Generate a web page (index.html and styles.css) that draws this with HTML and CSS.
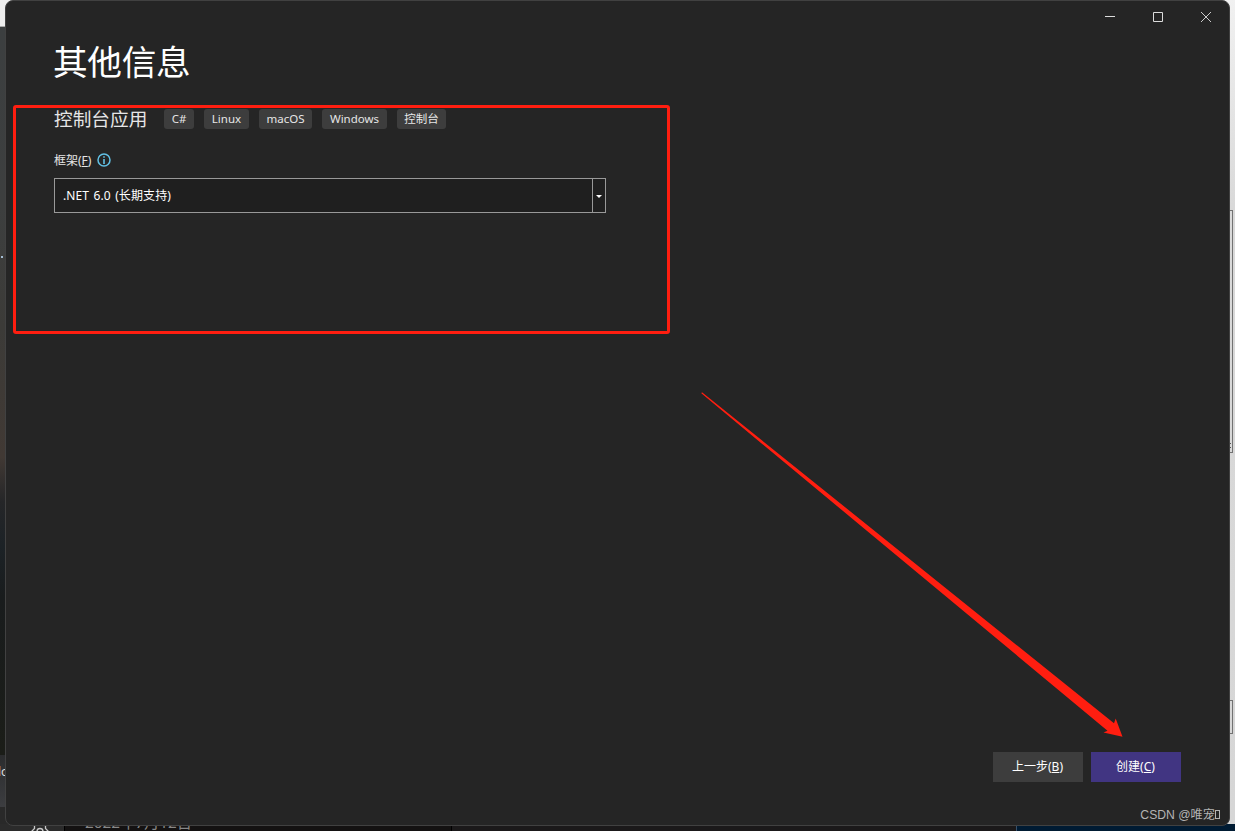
FILE: index.html
```html
<!DOCTYPE html>
<html lang="zh-CN">
<head>
    <meta charset="UTF-8">
    <meta name="viewport" content="width=device-width, initial-scale=1.0">
    <title>其他信息</title>
    <link rel="stylesheet" href="styles.css">
</head>
<body>
    <!-- what shows around the edges of the dialog -->
    <div class="desktop">
        <div class="desk-left">
            <div class="desk-light"></div>
            <div class="desk-photo"><span class="desk-dot"></span></div>
            <div class="desk-tab">lo</div>
            <div class="desk-tab-end"></div>
        </div>
        <div class="desk-right">
            <div class="desk-box tall"><i></i><i></i></div>
            <div class="desk-box short"></div>
        </div>
        <div class="desk-bottom">
            <div class="gear-cell">
                <svg width="18" height="18" viewBox="0 0 18 18" fill="none" stroke="#c8c8c8" stroke-width="1.3">
                    <path d="M3.500 1v2.500L1 6v6l2.500 2.500V17h11v-2.500L17 12V6l-2.500-2.500V1"/>
                    <circle cx="9" cy="6.500" r="3"/>
                </svg>
            </div>
            <div class="date-cell">2022年7月12日</div>
            <div class="plain-cell"></div>
            <div class="blue-cell"></div>
        </div>
    </div>

    <main class="window">
        <div class="titlebar">
            <svg class="win-btn" viewBox="0 0 10 10"><path d="M0 4.500h10"/></svg>
            <svg class="win-btn" viewBox="0 0 10 10"><path d="M.5.5h9v9h-9z"/></svg>
            <svg class="win-btn close" viewBox="0 0 10 10"><path d="M0 0l10 10M10 0L0 10"/></svg>
        </div>

        <div class="content">
            <h1>其他信息</h1>
            <div class="project">
                <h2>控制台应用</h2>
                <span class="tag tag-cs">C#</span>
                <span class="tag tag-linux">Linux</span>
                <span class="tag tag-mac">macOS</span>
                <span class="tag tag-win">Windows</span>
                <span class="tag tag-console">控制台</span>
            </div>

            <div class="label-row">
                <label>框架(<u>F</u>)</label>
                <svg class="info" width="14" height="14" viewBox="0 0 14 14">
                    <circle cx="7" cy="7" r="6" fill="none" stroke="#62c1e5" stroke-width="1.500"/>
                    <path d="M6.200 3.200h1.600v1.600H6.200zM6.200 6h1.600v5H6.200z" fill="#62c1e5"/>
                </svg>
            </div>
            <div class="select">
                <span class="select-value">.NET 6.0 (长期支持)</span>
                <span class="select-arrow">
                    <svg width="6" height="3" viewBox="0 0 6 3"><path d="M0 0h6L3 3z" fill="#fff"/></svg>
                </span>
            </div>
        </div>

        <div class="actions">
            <button class="btn">上一步(<u>B</u>)</button>
            <button class="btn primary">创建(<u>C</u>)</button>
        </div>
        <div class="watermark">CSDN @唯宠<span class="tofu"></span></div>
    </main>

    <svg class="marks" width="1235" height="831" viewBox="0 0 1235 831">
        <rect x="14.500" y="106.500" width="654" height="226" rx="1.500" fill="none" stroke="#ff1e10" stroke-width="3"/>
        <path d="M702 392.200L1114 723.300L1115.700 718.500L1122.500 736.700L1103.500 732.500L1107.500 730.700L701.300 393.300Z" fill="#ff1e10"/>
    </svg>
</body>
</html>
```

FILE: styles.css
```css
:root {
    --window-bg: #252525;
    --window-border: #414141;
    --tag-bg: #3d3d3d;
    --accent: #413582;
}

* {
    box-sizing: border-box;
}

body {
    margin: 0;
    width: 1235px;
    height: 831px;
    position: relative;
    overflow: hidden;
    font-family: "Noto Sans", "Noto Sans CJK SC", sans-serif;
    font-size: 12px;
    color: #fff;
}

h1, h2 {
    margin: 0;
    font-weight: normal;
}

u {
    text-underline-offset: 1px;
}

/* desktop behind the dialog */
.desktop {
    width: 1235px;
    height: 831px;
    display: grid;
    grid-template-columns: 617px 618px;
    grid-template-rows: 824px 7px;
    background: #1b1b1b;
}

.desk-left {
    display: flex;
    flex-direction: column;
}

.desk-light {
    height: 27px;
    width: 20px;
    background: #ededed;
    border-bottom: 1px solid #aaa;
}

.desk-photo {
    height: 728px;
    padding-top: 229px;
    background: linear-gradient(#3c3f40 0, #3d3f3f 180px, #3c3b38 300px, #413934 430px, #252628 475px, #1c2226 520px, #191c1d 570px, #1b1d18 100%);
}

.desk-dot {
    display: block;
    width: 2px;
    height: 2px;
    margin-left: 1px;
    background: #a5bdd4;
}

.desk-tab {
    height: 52px;
    padding-top: 8px;
    background: linear-gradient(#2b2c2e, #3c3d40);
    color: #ddd;
    font-size: 12px;
    line-height: 17px;
    text-indent: -2px;
}

.desk-tab-end {
    flex: 1;
    background: #292929;
}

.desk-right {
    display: flex;
    flex-direction: column;
    align-items: flex-end;
    padding-right: 2px;
    background: linear-gradient(#f1f1f1, #d9d9d9 25%, #d6d6d6);
}

.desk-box {
    width: 20px;
    border: 1px solid #737373;
}

.tall {
    height: 243px;
    margin-top: 210px;
    display: flex;
    flex-direction: column;
    justify-content: flex-end;
    align-items: flex-end;
    gap: 3px;
    padding: 0 1px 4px;
}

.tall i {
    width: 2px;
    height: 1px;
    background: #555;
}

.short {
    height: 34px;
    margin-top: 247px;
}

.desk-bottom {
    grid-column: 1 / 3;
    display: grid;
    grid-template-columns: 64px 388px 564px 1fr;
}

.gear-cell {
    height: 7px;
    padding: 1px 0 0 31px;
    background: #2b2b2b;
}

/* the date is mostly covered by the dialog, only its lower edge shows */
.date-cell {
    height: 20px;
    margin-top: -13px;
    padding-left: 20px;
    background: #141212;
    border-left: 1px solid #000;
    border-right: 1px solid #000;
    color: #888;
    font-size: 15.3px;
    line-height: 22px;
    white-space: nowrap;
}

.plain-cell {
    background: #1b191a;
}

.blue-cell {
    background: #001b33;
    border-left: 1px solid #385069;
}

/* dialog */
.window {
    position: absolute;
    left: 5px;
    top: 0;
    width: 1225px;
    height: 826px;
    display: flex;
    flex-direction: column;
    background: var(--window-bg);
    border: 1px solid var(--window-border);
    border-radius: 8px;
}

.titlebar {
    display: flex;
    justify-content: flex-end;
    gap: 38px;
    padding: 11px 18px 0 0;
}

.win-btn {
    width: 10px;
    height: 10px;
    overflow: visible;
    fill: none;
    stroke: #dcdcdc;
    stroke-width: 1;
}

.close {
    stroke: #ccc;
}

.content {
    padding: 18px 0 0 48px;
}

h1 {
    margin-left: -1px;
    font-size: 34.67px;
    letter-spacing: -0.3px;
    line-height: 44px;
}

.project {
    display: flex;
    align-items: center;
    height: 24px;
    margin-top: 23px;
}

h2 {
    width: 110px;
    color: #e6e6e6;
    font-size: 18.67px;
    line-height: 24px;
}

.tag {
    height: 20px;
    margin-right: 10px;
    background: var(--tag-bg);
    border-radius: 3px;
    color: #e6e6e6;
    font-size: 11.5px;
    line-height: 20px;
    text-align: center;
}

.tag-cs {
    width: 30px;
}

.tag-linux {
    width: 45px;
}

.tag-mac {
    width: 53px;
}

.tag-win {
    width: 65px;
}

.tag-console {
    width: 49px;
}

.label-row {
    display: flex;
    align-items: center;
    gap: 6px;
    height: 18px;
    margin-top: 20px;
    color: #e6e6e6;
}

.select {
    display: flex;
    width: 552px;
    height: 35px;
    margin-top: 9px;
    background: #1f1f1f;
    border: 1px solid #999;
}

.select-value {
    flex: 1;
    padding-left: 8px;
    letter-spacing: 0.1px;
    line-height: 33px;
    word-spacing: 1.2px;
}

.select-arrow {
    display: flex;
    align-items: center;
    justify-content: center;
    width: 13px;
    padding-top: 1px;
    border-left: 1px solid #999;
}

.actions {
    display: flex;
    justify-content: flex-end;
    gap: 8px;
    margin-top: auto;
    padding-right: 48px;
}

.btn {
    width: 90px;
    height: 30px;
    padding: 0 1px 2px 0;
    background: #3d3d3d;
    border: none;
    color: #fff;
    font: inherit;
}

.primary {
    background: var(--accent);
}

.watermark {
    display: flex;
    align-items: center;
    align-self: flex-end;
    height: 18px;
    margin: 23px 9px 2px 0;
    color: #b4b4b4;
    font-family: "Liberation Sans", "Noto Sans CJK SC", sans-serif;
    font-size: 12.2px;
    white-space: pre;
}

.tofu {
    width: 5px;
    height: 9px;
    border: 1px solid #b4b4b4;
}

/* red frame and arrow over the dialog */
.marks {
    position: absolute;
    left: 0;
    top: 0;
}
```
